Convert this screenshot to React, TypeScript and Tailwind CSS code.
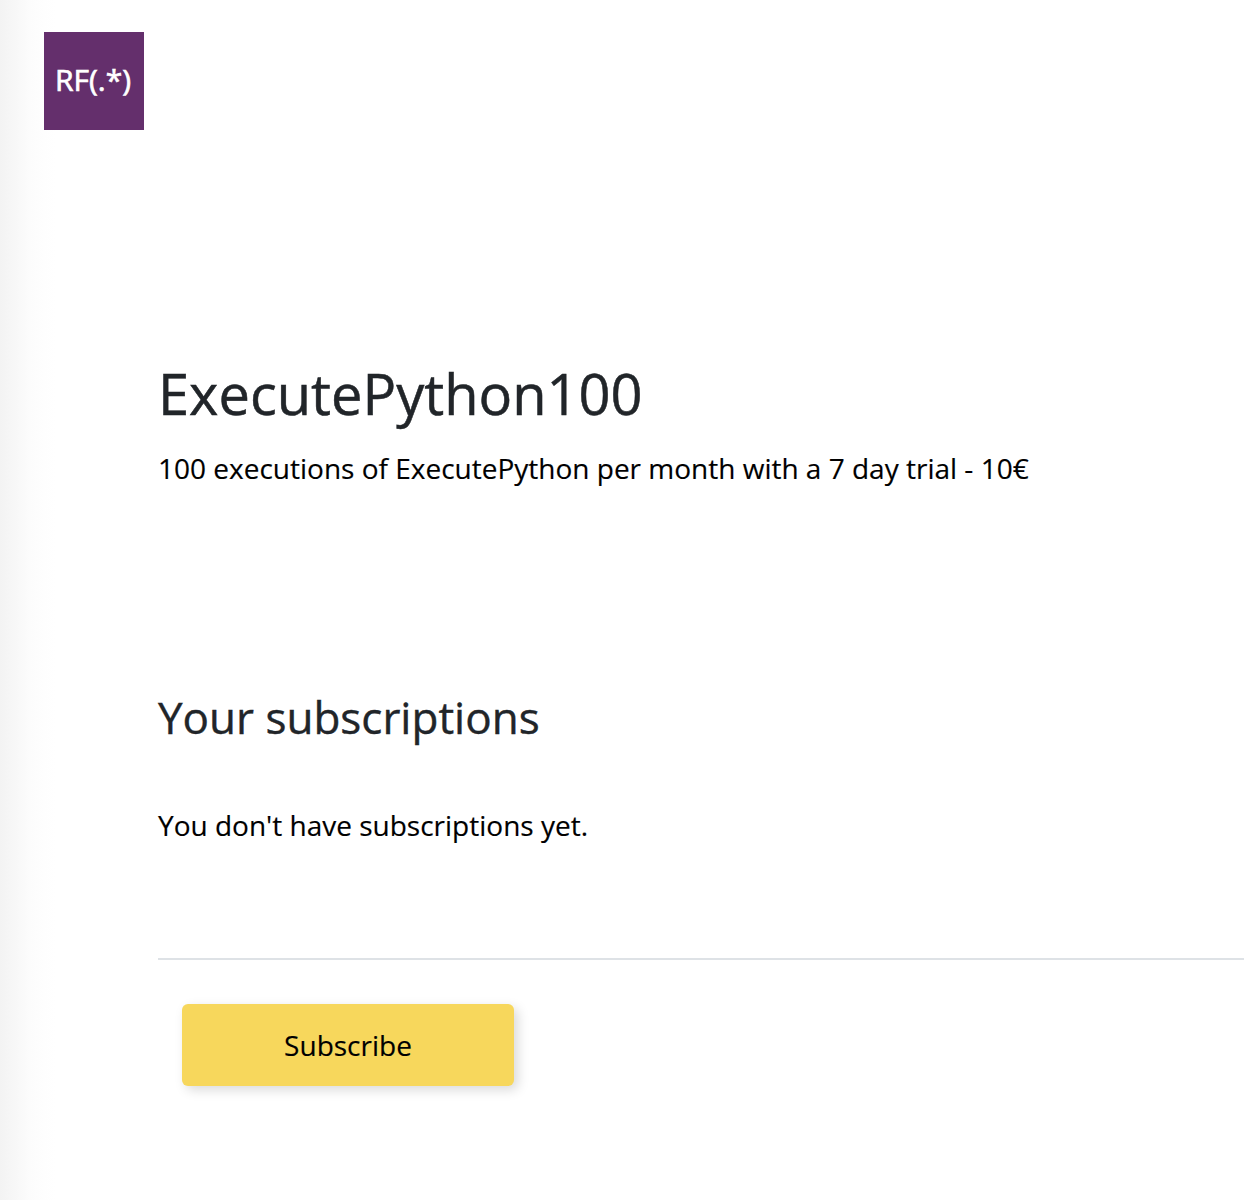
function Logo() {
  return (
    <div className="ml-11 flex h-[98px] w-[100px] items-center justify-center bg-[#642f6c] pr-0.5 pb-0.5 text-[30px] leading-none text-white [-webkit-text-stroke:0.7px]">
      <span>RF(.*)</span>
    </div>
  );
}

export default function App() {
  return (
    <div className="h-[1200px] w-full overflow-hidden bg-white bg-[linear-gradient(to_right,#f3f3f3_0px,#f7f7f7_14px,#fcfcfc_30px,#fefefe_44px,#ffffff_56px)] pt-8 font-['Open_Sans',sans-serif]">
      <Logo />

      <main className="ml-[158px] pt-[229px]">
        <h1 className="text-[56px] leading-[68px] text-[#212529] [-webkit-text-stroke:0.5px]">ExecutePython100</h1>
        <p className="mt-5 text-[28px] leading-[42px] text-black [-webkit-text-stroke:0.15px]">
          100 executions of ExecutePython per month with a 7 day trial - 10€
        </p>

        <h2 className="mt-[201px] text-[44px] leading-[54px] text-[#212529] [-webkit-text-stroke:0.4px]">Your subscriptions</h2>
        <p className="mt-[60px] text-[28px] leading-[42px] text-black [-webkit-text-stroke:0.15px]">
          You don't have subscriptions yet.
        </p>

        <hr className="mt-28 border-t-2 border-[#dee2e6]" />

        <button className="mt-11 ml-6 h-[82px] w-[332px] rounded-md bg-[#f7d75c] text-[28px] text-black shadow-[4px_4px_12px_rgba(0,0,0,0.15)] [-webkit-text-stroke:0.15px]">
          Subscribe
        </button>
      </main>
    </div>
  );
}
